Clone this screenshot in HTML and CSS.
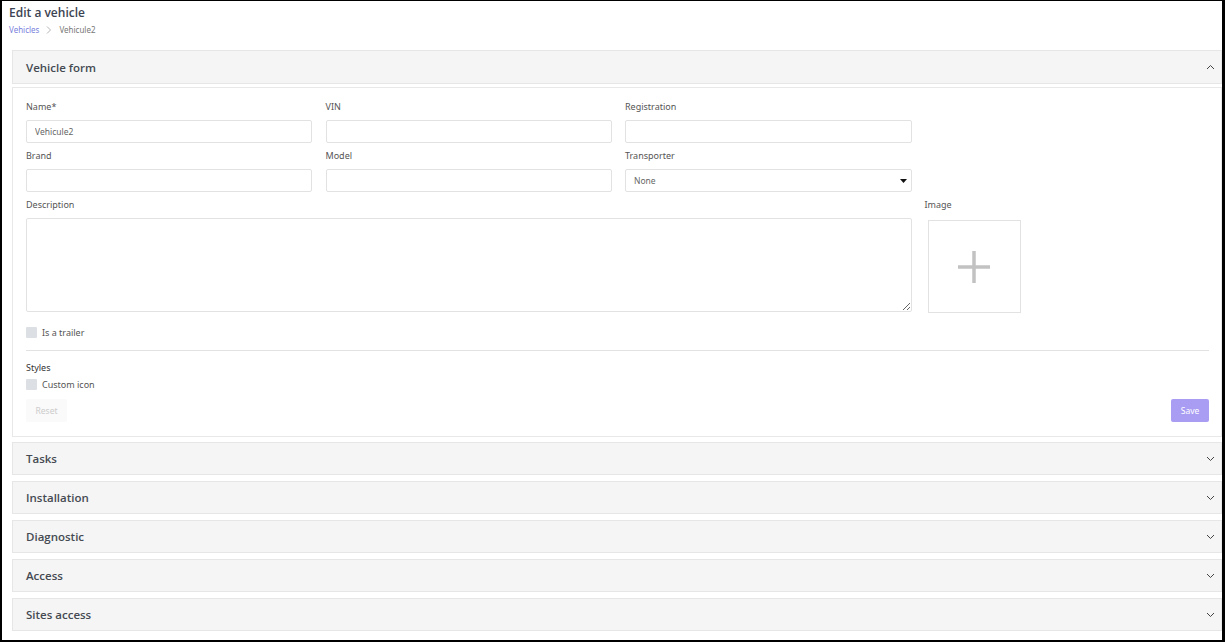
FILE: index.html
```html
<!DOCTYPE html>
<html lang="en">
<head>
    <meta charset="UTF-8">
    <meta name="viewport" content="width=device-width, initial-scale=1.0">
    <title>Edit a vehicle</title>
    <link rel="stylesheet" href="styles.css">
</head>
<body>
    <div class="frame">
        <div class="page-head">
            <h1 class="page-title">Edit a vehicle</h1>
            <div class="crumbs">
                <a href="#" class="crumb-link">Vehicles</a>
                <svg class="crumb-sep" width="6" height="8" viewBox="0 0 6 8"><path d="M1 0.5 L4.5 4 L1 7.5" fill="none" stroke="#b5b5b5" stroke-width="1"/></svg>
                <span class="crumb-current">Vehicule2</span>
            </div>
        </div>

        <div class="panel open">
            <div class="panel-head">
                <span>Vehicle form</span>
                <svg class="chev" width="9" height="6" viewBox="0 0 9 6"><path d="M1 5 L4.5 1.5 L8 5" fill="none" stroke="#444" stroke-width="1"/></svg>
            </div>
            <div class="panel-body">
                <div class="form-grid">
                    <div class="field">
                        <label>Name*</label>
                        <input type="text" value="Vehicule2">
                    </div>
                    <div class="field">
                        <label>VIN</label>
                        <input type="text">
                    </div>
                    <div class="field">
                        <label>Registration</label>
                        <input type="text">
                    </div>
                    <div></div>

                    <div class="field">
                        <label>Brand</label>
                        <input type="text">
                    </div>
                    <div class="field">
                        <label>Model</label>
                        <input type="text">
                    </div>
                    <div class="field">
                        <label>Transporter</label>
                        <div class="select">
                            <span>None</span>
                            <svg width="7" height="4" viewBox="0 0 7 4"><path d="M0 0 H7 L3.5 4 Z" fill="#111"/></svg>
                        </div>
                    </div>
                    <div></div>

                    <div class="field wide">
                        <label>Description</label>
                        <textarea></textarea>
                    </div>
                    <div class="field image-field">
                        <label>Image</label>
                        <div class="image-box">
                            <svg width="34" height="34" viewBox="0 0 34 34"><path d="M17 1 V33 M1 17 H33" stroke="#c2c2c2" stroke-width="3.5"/></svg>
                        </div>
                    </div>
                </div>

                <label class="check trailer"><span class="box"></span>Is a trailer</label>

                <hr class="sep">

                <div class="styles-title">Styles</div>
                <label class="check"><span class="box"></span>Custom icon</label>

                <div class="actions">
                    <button class="btn btn-reset">Reset</button>
                    <button class="btn btn-save">Save</button>
                </div>
            </div>
        </div>

        <div class="panel">
            <div class="panel-head">
                <span>Tasks</span>
                <svg class="chev" width="9" height="6" viewBox="0 0 9 6"><path d="M1 1 L4.5 4.5 L8 1" fill="none" stroke="#444" stroke-width="1"/></svg>
            </div>
        </div>
        <div class="panel">
            <div class="panel-head">
                <span>Installation</span>
                <svg class="chev" width="9" height="6" viewBox="0 0 9 6"><path d="M1 1 L4.5 4.5 L8 1" fill="none" stroke="#444" stroke-width="1"/></svg>
            </div>
        </div>
        <div class="panel">
            <div class="panel-head">
                <span>Diagnostic</span>
                <svg class="chev" width="9" height="6" viewBox="0 0 9 6"><path d="M1 1 L4.5 4.5 L8 1" fill="none" stroke="#444" stroke-width="1"/></svg>
            </div>
        </div>
        <div class="panel">
            <div class="panel-head">
                <span>Access</span>
                <svg class="chev" width="9" height="6" viewBox="0 0 9 6"><path d="M1 1 L4.5 4.5 L8 1" fill="none" stroke="#444" stroke-width="1"/></svg>
            </div>
        </div>
        <div class="panel">
            <div class="panel-head">
                <span>Sites access</span>
                <svg class="chev" width="9" height="6" viewBox="0 0 9 6"><path d="M1 1 L4.5 4.5 L8 1" fill="none" stroke="#444" stroke-width="1"/></svg>
            </div>
        </div>
    </div>
</body>
</html>
```

FILE: styles.css
```css
body {
    margin: 0;
    font-family: "Noto Sans", "Open Sans", sans-serif;
    color: #444;
    background-color: #fff;
}

.frame {
    height: 642px;
    box-sizing: border-box;
    border-style: solid;
    border-color: #000;
    border-width: 1px 3px 2px 2px;
    overflow: hidden;
}

.page-head {
    padding: 4px 0 0 7px;
    height: 49px;
    box-sizing: border-box;
}

.page-title {
    margin: 0;
    font-family: "Open Sans", sans-serif;
    font-size: 12px;
    font-weight: 600;
    line-height: 16px;
    color: #3c4452;
}

.crumbs {
    display: flex;
    align-items: center;
    gap: 7px;
    margin-top: 4px;
    font-size: 8px;
    line-height: 10px;
}

.crumb-link {
    color: #7a7fdc;
    text-decoration: none;
}

.crumb-current {
    color: #777;
}

.panel {
    margin: 0 0 6px 10px;
}

.panel-head {
    display: flex;
    align-items: center;
    justify-content: space-between;
    height: 33px;
    box-sizing: border-box;
    padding: 0 6px 0 13px;
    background-color: #f5f5f5;
    border: 1px solid #e6e6e6;
    font-family: "Open Sans", sans-serif;
    font-size: 11.5px;
    font-weight: 600;
    color: #454a52;
}

.panel.open .panel-head {
    height: 34px;
    margin-bottom: 3px;
}

.panel.open {
    margin-bottom: 5px;
}

.panel-body {
    border: 1px solid #e8e8e8;
    padding: 12px 12px 13px 13px;
    height: 350px;
    box-sizing: border-box;
}

.form-grid {
    display: grid;
    grid-template-columns: 286px 286px 287px 1fr;
    column-gap: 13.5px;
    row-gap: 6px;
}

.field label {
    display: block;
    font-size: 9px;
    line-height: 13px;
    color: #555;
    margin-bottom: 7px;
}

.field input,
.select {
    display: block;
    width: 100%;
    height: 23px;
    box-sizing: border-box;
    border: 1px solid #e2e2e2;
    border-radius: 2px;
    padding: 0 8px;
    font-family: inherit;
    font-size: 8.5px;
    color: #666;
    outline: none;
}

.select {
    display: flex;
    align-items: center;
    justify-content: space-between;
    margin-top: 1px;
    padding-right: 4px;
}

.wide {
    grid-column: 1 / 4;
}

.field textarea {
    display: block;
    width: 100%;
    height: 94px;
    box-sizing: border-box;
    border: 1px solid #e2e2e2;
    border-radius: 2px;
    font-family: inherit;
    resize: vertical;
    outline: none;
}

.image-field {
    margin-left: -1px;
}

.image-field label {
    margin-bottom: 9px;
}

.image-box {
    width: 93px;
    height: 93px;
    box-sizing: border-box;
    border: 1px solid #e2e2e2;
    margin-left: 3px;
    display: flex;
    align-items: center;
    justify-content: center;
}

.check {
    display: flex;
    align-items: center;
    gap: 5px;
    font-size: 9px;
    line-height: 13px;
    color: #555;
}

.check .box {
    width: 11px;
    height: 11px;
    background-color: #dcdfe4;
    border-radius: 1px;
}

.trailer {
    margin-top: 13px;
}

.sep {
    border: 0;
    border-top: 1px solid #e2e2e2;
    margin: 11px 0 10px 0;
}

.styles-title {
    font-size: 9px;
    line-height: 13px;
    color: #333;
    margin-bottom: 4px;
}

.actions {
    display: flex;
    justify-content: space-between;
    margin-top: 8px;
}

.btn {
    height: 23px;
    border: 0;
    border-radius: 2px;
    font-family: inherit;
    font-size: 8.5px;
}

.btn-reset {
    width: 41px;
    background-color: #fafafa;
    color: #ccc;
}

.btn-save {
    width: 38px;
    background-color: #a99cf3;
    color: #fff;
}
```
